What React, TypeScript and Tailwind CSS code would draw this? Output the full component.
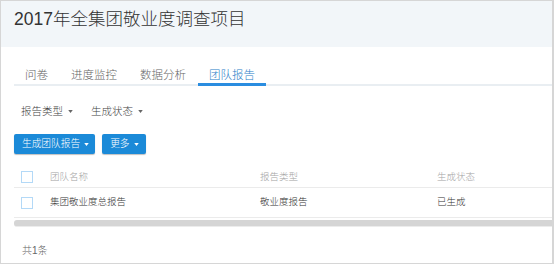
const tabs = ["问卷", "进度监控", "数据分析", "团队报告"];

function Caret({ className = "" }: { className?: string }) {
  return (
    <svg viewBox="0 0 6 4" className={"h-[3px] w-[5px] shrink-0 " + className}>
      <path d="M0 0h6L3 4z" fill="currentColor" />
    </svg>
  );
}

function Box() {
  return <span className="block h-[12px] w-[12px] shrink-0 border-[1.5px] border-[#b3d9f7] bg-white" />;
}

const rows = [{ name: "集团敬业度总报告", type: "敬业度报告", status: "已生成" }];

export default function App() {
  return (
    <div
      className="h-[264px] w-[554px] overflow-hidden border border-r-2 border-[#d6d6d6] bg-white font-light text-[#333]"
      style={{ fontFamily: '"Liberation Sans", "Noto Sans CJK SC", sans-serif' }}
    >
      <div className="h-[46px] bg-[#f2f6f9] pl-[13px] pt-[6px]">
        <h1 className="text-[17.5px] leading-[24px] text-[#333]">2017年全集团敬业度调查项目</h1>
      </div>

      {/* tabs */}
      <div className="mt-[19px] ml-[13px] flex items-start gap-[1px] border-b-2 border-[#e9eef2]">
        {tabs.map((t, i) =>
          i === 3 ? (
            <div
              key={t}
              className="-mb-[2px] h-[20px] border-b-[3px] border-[#2a8de0] px-[11px] pt-[3px] text-[11.5px] leading-[13px] text-[#2b7ec8]"
            >
              {t}
            </div>
          ) : (
            <div key={t} className="h-[18px] px-[11px] pt-[3px] text-[11.5px] leading-[13px] text-[#666]">
              {t}
            </div>
          )
        )}
      </div>

      {/* filters */}
      <div className="mt-[17px] flex items-center pl-[20px] text-[10.5px] leading-[16px] text-[#444]">
        <span className="flex items-center gap-[5px]">
          报告类型 <Caret className="text-[#666]" />
        </span>
        <span className="ml-[18px] flex items-center gap-[5px]">
          生成状态 <Caret className="text-[#666]" />
        </span>
      </div>

      {/* actions */}
      <div className="mt-[15px] flex gap-[7px] pl-[13px]">
        <button className="flex h-[20px] items-center gap-[4px] rounded-[2px] bg-[#1b8ad8] pl-[8px] pr-[6px] text-[9.7px] text-white shadow-[0_1px_1px_rgba(0,0,0,0.25)]">
          生成团队报告 <Caret className="text-white" />
        </button>
        <button className="flex h-[20px] items-center gap-[4px] rounded-[2px] bg-[#1b8ad8] pl-[8px] pr-[7px] text-[9.7px] text-white shadow-[0_1px_1px_rgba(0,0,0,0.25)]">
          更多 <Caret className="text-white" />
        </button>
      </div>

      {/* table */}
      <div className="mt-[13px] ml-[13px]">
        <div className="flex h-[21px] items-center border-b border-[#ebebeb] text-[9.5px] text-[#a3a3a3]">
          <div className="w-[36px] pl-[7px]">
            <Box />
          </div>
          <div className="w-[210px]">团队名称</div>
          <div className="w-[177px]">报告类型</div>
          <div>生成状态</div>
        </div>
        {rows.map((r) => (
          <div key={r.name} className="flex h-[30px] items-center border-b border-[#ebebeb] text-[9.5px] text-[#333]">
            <div className="w-[36px] pl-[7px]">
              <Box />
            </div>
            <div className="w-[210px]">{r.name}</div>
            <div className="w-[177px]">{r.type}</div>
            <div>{r.status}</div>
          </div>
        ))}
        <div className="mt-[2px] h-[7px] rounded-l-[3px] border-b border-[#ececec] bg-[#d5d5d5]" />
      </div>

      <div className="mt-[17px] pl-[21px] text-[10px] leading-[14px] text-[#666]">共1条</div>
    </div>
  );
}
